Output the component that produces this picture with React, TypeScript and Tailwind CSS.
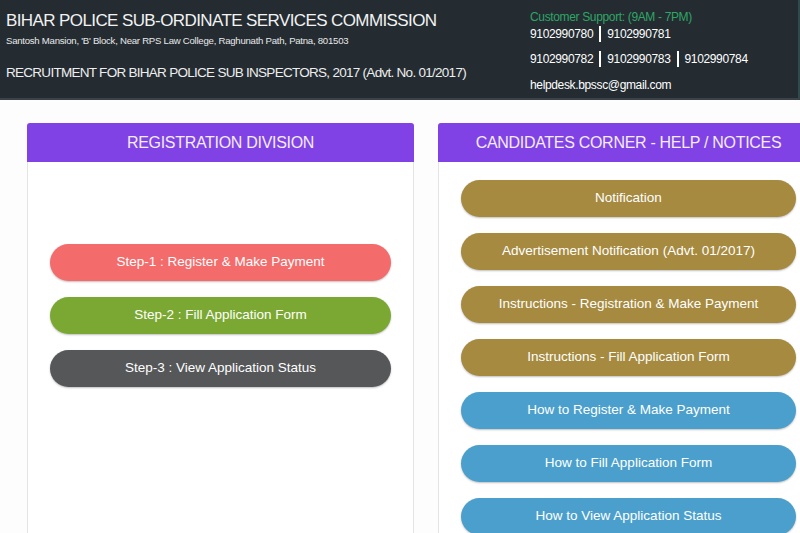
import React from "react";

const font = { fontFamily: '"Liberation Sans", Arial, sans-serif' };

function Btn({ label, cls }: { label: string; cls: string }) {
  return (
    <div
      className={`h-[37px] rounded-full flex items-center justify-center text-[13.5px] text-white shadow-[0_1px_2px_rgba(0,0,0,0.25)] ${cls}`}
    >
      {label}
    </div>
  );
}

function Bar() {
  return <span className="mx-[6px] inline-block w-[2px] h-[16px] bg-white" />;
}

export default function App() {
  return (
    <div className="w-[800px] h-[533px] overflow-hidden bg-[#fdfdfd]" style={font}>
      <header className="h-[100px] bg-[#242c32] border-b-2 border-[#3b4349] flex text-white">
        <div className="w-[523px] pl-[6px] pt-[10px]">
          <div className="text-[17px] leading-[22px] tracking-[-0.6px] text-[#f2f2f2]">
            BIHAR POLICE SUB-ORDINATE SERVICES COMMISSION
          </div>
          <div className="text-[9.6px] leading-[12px] mt-[3px] tracking-[-0.25px] text-[#e8e8e8]">
            Santosh Mansion, 'B' Block, Near RPS Law College, Raghunath Path, Patna, 801503
          </div>
          <div className="text-[13.5px] leading-[18px] mt-[17px] tracking-[-0.72px] text-[#eeeeee]">
            RECRUITMENT FOR BIHAR POLICE SUB INSPECTORS, 2017 (Advt. No. 01/2017)
          </div>
        </div>
        <div className="flex-1 pl-[7px] pt-[9px] text-[12px] tracking-[-0.35px] border-r-2 border-[#2f4a4c]">
          <div className="text-[#2fa566] leading-[16px]">Customer Support: (9AM - 7PM)</div>
          <div className="leading-[16px] mt-[1px] flex items-center">
            <span>9102990780</span>
            <Bar />
            <span>9102990781</span>
          </div>
          <div className="leading-[16px] mt-[9px] flex items-center">
            <span>9102990782</span>
            <Bar />
            <span>9102990783</span>
            <Bar />
            <span>9102990784</span>
          </div>
          <div className="leading-[16px] mt-[10px]">helpdesk.bpssc@gmail.com</div>
        </div>
      </header>

      <main className="flex gap-[24px] pl-[27px] pt-[23px]">
        <section className="w-[387px] shrink-0 h-[420px] bg-white border border-[#e4e4e4] rounded-t-[3px]">
          <div className="h-[39px] -mx-px -mt-px bg-[#8142e5] rounded-t-[3px] flex items-center justify-center text-[16px] text-[#f3ecff] tracking-[-0.3px]">
            REGISTRATION DIVISION
          </div>
          <div className="px-[22px] pt-[82px] flex flex-col gap-[16px]">
            <Btn label="Step-1 : Register & Make Payment" cls="bg-[#f46b6b]" />
            <Btn label="Step-2 : Fill Application Form" cls="bg-[#7ba832]" />
            <Btn label="Step-3 : View Application Status" cls="bg-[#555759]" />
          </div>
        </section>

        <section className="w-[381px] shrink-0 h-[420px] bg-white border border-[#e4e4e4] rounded-t-[3px]">
          <div className="h-[39px] -mx-px -mt-px bg-[#8142e5] rounded-t-[3px] flex items-center justify-center text-[16px] text-[#f3ecff] tracking-[-0.3px]">
            CANDIDATES CORNER - HELP / NOTICES
          </div>
          <div className="px-[22px] pt-[18px] flex flex-col gap-[16px]">
            <Btn label="Notification" cls="bg-[#a58a40]" />
            <Btn label="Advertisement Notification (Advt. 01/2017)" cls="bg-[#a58a40]" />
            <Btn label="Instructions - Registration & Make Payment" cls="bg-[#a58a40]" />
            <Btn label="Instructions - Fill Application Form" cls="bg-[#a58a40]" />
            <Btn label="How to Register & Make Payment" cls="bg-[#4b9fcc]" />
            <Btn label="How to Fill Application Form" cls="bg-[#4b9fcc]" />
            <Btn label="How to View Application Status" cls="bg-[#4b9fcc]" />
          </div>
        </section>
      </main>
    </div>
  );
}
